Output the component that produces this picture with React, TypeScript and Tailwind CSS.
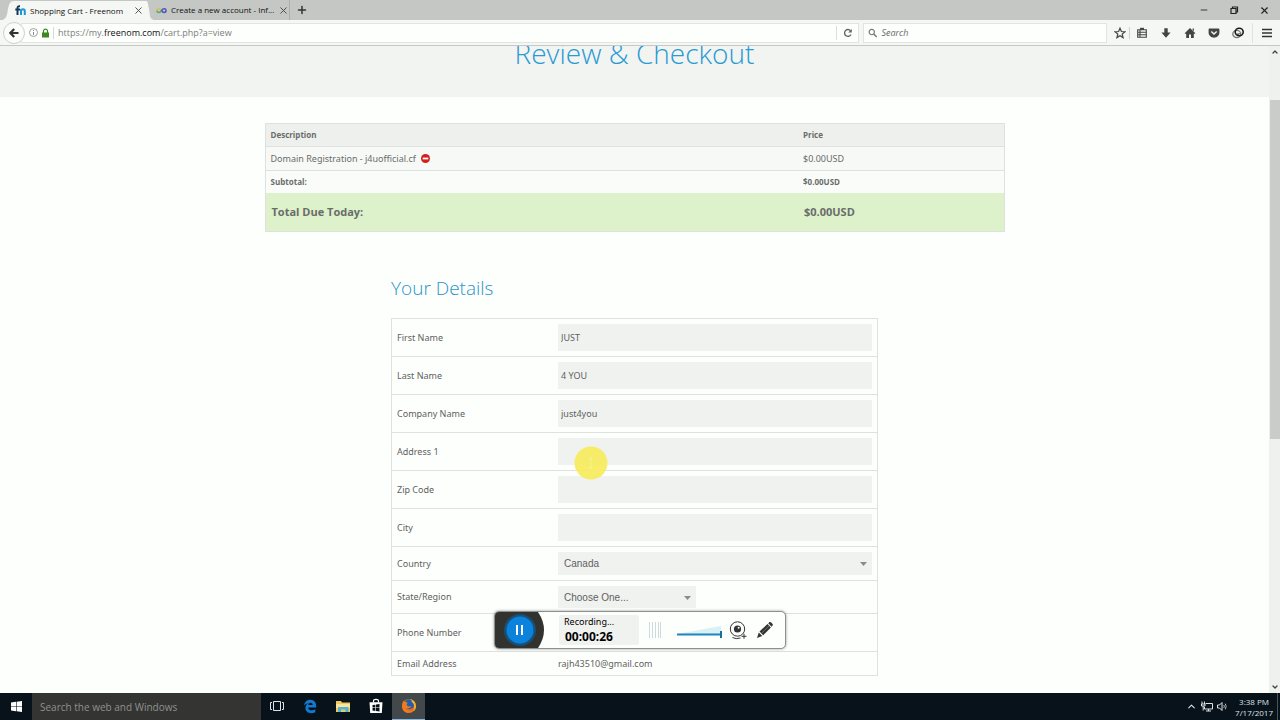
import { useState } from 'react'
import type { ReactNode } from 'react'
import { ChevronDown, ChevronUp, Minus, Plus, X } from 'lucide-react'
import { clsx } from 'clsx'

const UI_FONT = 'font-["Open_Sans","Noto_Sans",sans-serif]'
const BODY_FONT = 'font-["Noto_Sans","Open_Sans",sans-serif]'
const FORM_FONT = 'font-["Liberation_Sans",Arial,sans-serif]'

/* ---------- Browser chrome ---------- */

function TabBar() {
  return (
    <div className="flex h-5 shrink-0 items-stretch bg-[#c5c7c4] text-[8px] font-medium text-[#111]">
      <div className="flex pl-[2px] pt-px">
        <svg className="h-full w-3" viewBox="0 0 12 19" preserveAspectRatio="none">
          <path d="M0 19C5 18 5 13 6 8C7 3 8 0 12 0V19Z" fill="#f5f7f4" />
        </svg>
        <div className="flex w-[132px] items-center gap-1 bg-[#f5f7f4] pl-px">
          <svg className="h-[11px] w-[11px] shrink-0" viewBox="0 0 11 11" fill="none" strokeWidth="2">
            <path d="M2.5 10V3.2C2.5 1.5 3.4 1 5 1.2M.3 4.6H5" stroke="#17395c" />
            <path d="M6 10V4M6 6.2C6.2 3.6 9.8 3.6 9.8 6.2V10" stroke="#1a9ad6" />
          </svg>
          <span className="flex-1 whitespace-nowrap">Shopping Cart - Freenom</span>
          <button type="button" aria-label="Close tab" className="pr-[2px]">
            <X className="h-[11px] w-[11px] text-[#444]" strokeWidth={2} />
          </button>
        </div>
        <svg className="h-full w-2" viewBox="0 0 8 19" preserveAspectRatio="none">
          <path d="M8 19C3 18 4 13 3 8C2 3 2 0 0 0V19Z" fill="#f5f7f4" />
        </svg>
      </div>
      <div className="flex w-[136px] items-center gap-1 border-r border-[#adafac] pl-[2px]">
        <svg className="h-[11px] w-[11px] shrink-0" viewBox="0 0 11 11" fill="none" strokeWidth="1.5">
          <path d="M5.5 5.5C4 3.2 1 3.2 1 5.5" stroke="#d9c23c" />
          <path d="M1 5.5C1 8 4 8 5.5 5.5" stroke="#4fae74" />
          <path d="M5.5 5.5C7 3.2 10 3.2 10 5.5C10 8 7 8 5.5 5.5" stroke="#4a57c0" />
        </svg>
        <span className="flex-1 whitespace-nowrap">Create a new account - Inf...</span>
        <button type="button" aria-label="Close tab" className="pr-[9px]">
          <X className="h-[11px] w-[11px] text-[#444]" strokeWidth={2} />
        </button>
      </div>
      <button type="button" aria-label="New tab" className="px-[6px]">
        <Plus className="h-3 w-3 text-[#333]" strokeWidth={3} />
      </button>
      <div className="ml-auto flex items-center gap-5 pr-[10px] text-[#222]">
        <button type="button" aria-label="Minimize">
          <Minus className="h-[10px] w-[10px]" strokeWidth={2} />
        </button>
        <button type="button" aria-label="Restore">
          <svg className="h-[10px] w-[10px]" viewBox="0 0 10 10" fill="none" stroke="currentColor" strokeWidth="1.2">
            <path d="M2 3.5H7V8.5H2ZM3.5 3.5V2H8.5V7H7" />
          </svg>
        </button>
        <button type="button" aria-label="Close">
          <X className="h-[11px] w-[11px]" strokeWidth={2.4} />
        </button>
      </div>
    </div>
  )
}

function ToolButton({ label, children }: { label: string; children: ReactNode }) {
  return (
    <button type="button" aria-label={label} className="flex w-6 items-center justify-center">
      <svg className="h-3 w-3" viewBox="0 0 12 12" fill="#444">
        {children}
      </svg>
    </button>
  )
}

function Toolbar() {
  return (
    <div className="flex h-[26px] shrink-0 items-center border-b border-[#c6c8c6] bg-[#f5f7f4]">
      <button
        type="button"
        aria-label="Back"
        className="z-10 ml-[3px] flex h-[22px] w-[22px] shrink-0 items-center justify-center rounded-full border border-[#cfd1cf] bg-[#fbfdfb]"
      >
        <svg className="h-[10px] w-[10px]" viewBox="0 0 10 10" fill="none" stroke="#333" strokeWidth="2.2">
          <path d="M9.5 5H1.5M5.2 1L1.3 5L5.2 9" />
        </svg>
      </button>
      <div className="-ml-1 flex h-5 flex-1 items-center border border-[#e2e4e2] bg-[#fdfffd] pl-[7px]">
        <svg className="h-[9px] w-[9px]" viewBox="0 0 9 9" fill="none" stroke="#888">
          <circle cx="4.5" cy="4.5" r="4" strokeWidth=".8" />
          <path d="M4.5 4V7M4.5 2V3" />
        </svg>
        <svg className="ml-1 h-[10px] w-[7px]" viewBox="0 0 7 10">
          <path d="M1.5 5V3C1.5.5 5.5.5 5.5 3V5" fill="none" stroke="#3c8a1e" strokeWidth="1.2" />
          <rect y="4.5" width="7" height="5" fill="#3c8a1e" />
        </svg>
        <span className="ml-1 h-3 w-px bg-[#d8dad8]" />
        <span className="ml-1 flex-1 text-[9px] text-[#7b7d7b]">
          https://my.<span className="text-[#111]">freenom.com</span>/cart.php?a=view
        </span>
        <button type="button" aria-label="Reload" className="flex w-[22px] justify-center border-l border-[#dcdedc] py-[2px]">
          <svg className="h-[10px] w-[10px]" viewBox="0 0 10 10" fill="none" stroke="#666" strokeWidth="1.4">
            <path d="M8 6.5A3.4 3.4 0 1 1 7.6 2.8" />
            <path d="M8.8 1V4.6H5.2Z" fill="#666" stroke="none" />
          </svg>
        </button>
      </div>
      <label className="ml-1 flex h-5 w-[244px] items-center gap-1 border border-[#e2e4e2] bg-[#fdfffd] pl-1">
        <svg className="h-[10px] w-[10px]" viewBox="0 0 10 10" fill="none" stroke="#777" strokeWidth="1.2">
          <circle cx="4" cy="4" r="2.8" />
          <path d="M6 6L9.3 9.3" strokeWidth="1.6" />
        </svg>
        <input
          type="search"
          aria-label="Search"
          placeholder="Search"
          className="w-full bg-transparent text-[9px] italic outline-none placeholder:text-[#666]"
        />
      </label>
      <div className="flex items-center pl-px">
        <ToolButton label="Bookmark">
          <path
            d="M6 1.2L7.4 4.5L10.9 4.8L8.2 7.1L9.1 10.6L6 8.7L2.9 10.6L3.8 7.1L1.1 4.8L4.6 4.5Z"
            fill="none"
            stroke="#444"
            strokeWidth="1.2"
          />
        </ToolButton>
        <span className="-ml-[3px] h-3 w-px bg-[#d0d2d0]" />
        <ToolButton label="Reading list">
          <path d="M4 .8H8V3H4Z" />
          <path d="M1.7 2.8H10.3V10.3H1.7ZM1.7 5.2H10.3M1.7 7.7H10.3M4 3V10" fill="none" stroke="#444" strokeWidth="1.1" />
        </ToolButton>
        <ToolButton label="Downloads">
          <path d="M4.3 1.2H7.7V5.5H10.6L6 10.8L1.4 5.5H4.3Z" />
        </ToolButton>
        <ToolButton label="Home">
          <path d="M6 1L11.3 6.2L10.5 7L9.8 6.4V11H7V7.6H5V11H2.2V6.4L1.5 7L.7 6.2ZM8.6 1.5H9.9V4.2L8.6 3Z" />
        </ToolButton>
        <ToolButton label="Pocket">
          <path d="M1.8 1.5H10.2C11 1.5 11.4 2 11.4 2.6V5.6C11.4 12.4.6 12.4.6 5.6V2.6C.6 2 1 1.5 1.8 1.5Z" />
          <path d="M3.3 4.6L6 7.1L8.7 4.6" fill="none" stroke="#f5f7f4" strokeWidth="1.4" />
        </ToolButton>
        <ToolButton label="Add-on">
          <ellipse cx="4.8" cy="7" rx="4" ry="3.6" fill="none" stroke="#777" strokeWidth="1.3" />
          <ellipse cx="7.2" cy="5" rx="4" ry="3.7" fill="none" stroke="#1c1c1c" strokeWidth="1.6" />
          <path d="M4.6 6.6Q6 8.2 7.6 6.4" fill="none" stroke="#444" strokeWidth="1.3" />
        </ToolButton>
      </div>
      <button
        type="button"
        aria-label="Menu"
        className="ml-[2px] flex h-5 w-7 items-center justify-center border-l border-[#e0e2e0]"
      >
        <svg className="h-[10px] w-[10px]" viewBox="0 0 10 10" stroke="#333" strokeWidth="1.6">
          <path d="M0 1.5H10M0 5H10M0 8.5H10" />
        </svg>
      </button>
    </div>
  )
}

function Scrollbar() {
  return (
    <div className="flex w-[11px] shrink-0 flex-col items-center bg-[#eff1ef] text-[#444]">
      <ChevronUp className="mt-[2px] h-2 w-2" strokeWidth={4} />
      <div className="mt-11 h-[339px] w-[10px] bg-[#cacccA]" />
      <ChevronDown className="mb-[2px] mt-auto h-2 w-2" strokeWidth={4} />
    </div>
  )
}

/* ---------- Checkout page ---------- */

function CartTable() {
  return (
    <table className="w-full max-w-[740px] border-collapse border border-[#dfe1df] text-left text-[#6a6c6a]">
      <thead className="bg-[#eef0ee] text-[8px] leading-[12px]">
        <tr className="border-b border-[#dfe1df]">
          <th className="w-[533px] px-[5px] py-[5px] font-bold">Description</th>
          <th className="px-[5px] py-[5px] font-bold">Price</th>
        </tr>
      </thead>
      <tbody className={BODY_FONT}>
        <tr className="border-b border-[#dfe1df] bg-[#f7f9f7] text-[9px] leading-[13px]">
          <td className="px-[5px] py-[5px]">
            <span className="flex items-center gap-[5px]">
              Domain Registration - j4uofficial.cf
              <button type="button" aria-label="Remove item">
                <svg className="h-[9px] w-[9px]" viewBox="0 0 9 9">
                  <circle cx="4.5" cy="4.5" r="4.5" fill="#d3201b" />
                  <rect x="1.7" y="3.6" width="5.6" height="1.8" fill="#fff" />
                </svg>
              </button>
            </span>
          </td>
          <td className="px-[5px] py-[5px]">$0.00USD</td>
        </tr>
        <tr className={clsx('bg-[#fafcfa] text-[8px] font-bold leading-[12px]', UI_FONT)}>
          <td className="px-[5px] py-[5px]">Subtotal:</td>
          <td className="px-[5px] py-[5px]">$0.00USD</td>
        </tr>
        <tr className={clsx('bg-[#ddf1cb] text-[11px] font-bold leading-[18px]', UI_FONT)}>
          <td className="px-[6px] py-[10px]">Total Due Today:</td>
          <td className="px-[6px] py-[10px]">$0.00USD</td>
        </tr>
      </tbody>
    </table>
  )
}

interface RowProps {
  id: string
  label: string
  children: ReactNode
}

function Row({ id, label, children }: RowProps) {
  return (
    <div className="flex items-center border-b border-[#dfe1df] p-[5px]">
      <label htmlFor={id} className="w-[161px] shrink-0">
        {label}
      </label>
      {children}
    </div>
  )
}

function TextField({ id, value, narrow }: { id: string; value?: string; narrow?: boolean }) {
  return (
    <input
      id={id}
      type="text"
      defaultValue={value}
      className={clsx('h-[27px] bg-[#f0f2f0] px-[3px] outline-none', narrow ? 'w-[138px]' : 'w-full')}
    />
  )
}

function SelectField({ id, option, narrow }: { id: string; option: string; narrow?: boolean }) {
  return (
    <div className={clsx('relative text-[10px]', FORM_FONT, narrow ? 'h-[22px] w-[138px]' : 'h-[23px] w-full')}>
      <select id={id} className="h-full w-full appearance-none bg-[#f0f2f0] px-[6px] outline-none">
        <option>{option}</option>
      </select>
      <svg className="pointer-events-none absolute right-[5px] top-[10px] h-1 w-[7px]" viewBox="0 0 7 4">
        <path d="M0 0H7L3.5 4Z" fill="#8a8c8a" />
      </svg>
    </div>
  )
}

function PointerHalo() {
  return (
    <svg className="pointer-events-none absolute left-4 top-2 z-10 h-[34px] w-[34px]" viewBox="0 0 34 34">
      <circle cx="17" cy="17" r="16.5" fill="#f7ec5c" fillOpacity=".92" />
      <path d="M15 12H19M17 12V22M15 22H19" stroke="#fff" strokeOpacity=".25" />
    </svg>
  )
}

function DetailsForm() {
  return (
    <form className="w-full max-w-[487px] text-[#5f615f]">
      <h2 className="text-[19px] font-light leading-7 text-[#2a93c8]">Your Details</h2>
      <div className={clsx('mt-4 border border-[#dfe1df] text-[9px]', BODY_FONT)}>
        <Row id="first" label="First Name">
          <TextField id="first" value="JUST" />
        </Row>
        <Row id="last" label="Last Name">
          <TextField id="last" value="4 YOU" />
        </Row>
        <Row id="company" label="Company Name">
          <TextField id="company" value="just4you" />
        </Row>
        <Row id="address" label="Address 1">
          <div className="relative flex w-full">
            <TextField id="address" />
            <PointerHalo />
          </div>
        </Row>
        <Row id="zip" label="Zip Code">
          <TextField id="zip" />
        </Row>
        <Row id="city" label="City">
          <TextField id="city" />
        </Row>
        <Row id="country" label="Country">
          <SelectField id="country" option="Canada" />
        </Row>
        <Row id="state" label="State/Region">
          <SelectField id="state" option="Choose One..." narrow />
        </Row>
        <Row id="phone" label="Phone Number">
          <TextField id="phone" narrow />
        </Row>
        <div className="flex items-center p-[5px] leading-[13px]">
          <span className="w-[161px] shrink-0">Email Address</span>
          <span>rajh43510@gmail.com</span>
        </div>
      </div>
    </form>
  )
}

function CheckoutPage() {
  return (
    <main className="flex flex-1 flex-col items-center overflow-hidden bg-[#fdfffd]">
      <div className="flex h-[51px] w-full shrink-0 items-end justify-center overflow-hidden bg-[#f2f4f2] pb-[25px]">
        <h1 className="text-[28px] font-light leading-[38px] text-[#2a9ad2]">Review &amp; Checkout</h1>
      </div>
      <div className="flex w-full flex-col items-center gap-[42px] pt-[26px]">
        <CartTable />
        <DetailsForm />
      </div>
    </main>
  )
}

/* ---------- Screen recorder ---------- */

function Recorder() {
  const [paused, setPaused] = useState(false)
  const [volume, setVolume] = useState(100)

  return (
    <div className="absolute bottom-[71px] left-1/2 z-20 flex h-[38px] w-[292px] -translate-x-1/2 items-center overflow-hidden rounded-[5px] border border-[#8e908e] bg-[#fdfffd] shadow-[0_0_3px_rgba(0,0,0,0.4)]">
      <button
        type="button"
        aria-label={paused ? 'Resume' : 'Pause'}
        onClick={() => setPaused(!paused)}
        className="h-9 w-[50px] shrink-0"
      >
        <svg className="h-full w-full" viewBox="0 0 50 36">
          <path d="M0 0H43Q55 18 43 36H0Z" fill="#32332f" />
          <circle cx="25" cy="18" r="16" fill="#175078" />
          <circle cx="25" cy="18" r="13.5" fill="#0b83dc" />
          {paused ? <path d="M21 12L31 18L21 24Z" fill="#fff" /> : <path d="M21 13H23V23H21ZM26 13H28V23H26Z" fill="#fff" />}
        </svg>
      </button>
      <div className={clsx('ml-[14px] h-[30px] w-20 shrink-0 rounded-[2px] bg-[#f0f2f0] pl-[5px] text-black', BODY_FONT)}>
        <p className="text-[9px] leading-[14px]">Recording...</p>
        <p className="pl-px text-[12px] font-bold leading-4">00:00:26</p>
      </div>
      <svg className="ml-[10px] h-4 w-3 shrink-0" viewBox="0 0 12 16" stroke="#ccdbe0" strokeWidth="1">
        <path d="M.5 0V16M3.5 0V16M6.5 0V16M9.5 0V16M11.5 0V16" />
      </svg>
      <div className="relative ml-4 h-4 w-[45px] shrink-0">
        <svg className="absolute inset-0 h-full w-full" viewBox="0 0 45 16">
          <path d="M0 12L44 4V12Z" fill="#d9f0f7" />
          <path d="M0 12.5H45" stroke="#1f86bd" strokeWidth="2" />
        </svg>
        <input
          type="range"
          aria-label="Volume"
          value={volume}
          onChange={(e) => setVolume(Number(e.target.value))}
          className="absolute bottom-0 left-0 h-[7px] w-full appearance-none bg-transparent [&::-webkit-slider-thumb]:h-[7px] [&::-webkit-slider-thumb]:w-[2px] [&::-webkit-slider-thumb]:appearance-none [&::-webkit-slider-thumb]:bg-[#1b6d9c]"
        />
      </div>
      <button type="button" aria-label="Webcam" className="ml-[7px] shrink-0">
        <svg className="h-5 w-[18px]" viewBox="0 0 18 20" fill="none" stroke="#333">
          <circle cx="8.5" cy="9" r="7.2" />
          <circle cx="8.5" cy="9" r="3.6" fill="#333" stroke="none" />
          <circle cx="9.6" cy="7.8" r="1" fill="#fff" stroke="none" />
          <path d="M3.5 17.5Q7 19.5 11.5 18M12.5 16.3H17.5M15 13.8V18.8" />
        </svg>
      </button>
      <button type="button" aria-label="Draw" className="ml-[9px] shrink-0">
        <svg className="h-[18px] w-[18px]" viewBox="0 0 18 18" fill="#333">
          <path d="M1 17L2.8 11.5L6.3 15Z" />
          <path d="M3.5 10.6L11.5 3L14.9 6.4L7.2 14.3Z" />
          <path d="M12.2 2.2L13.6 1.1Q14.4.7 15 1.3L16.6 3Q17.2 3.8 16.6 4.5L15.6 5.7Z" />
          <path d="M5.5 12.3L13.2 4.8" stroke="#888" strokeWidth=".7" />
        </svg>
      </button>
    </div>
  )
}

/* ---------- Taskbar ---------- */

function TaskButton({ label, active, children }: { label: string; active?: boolean; children: ReactNode }) {
  return (
    <button
      type="button"
      aria-label={label}
      className={clsx(
        'flex w-[33px] items-center justify-center border-b',
        active ? 'border-[#86b8e2] bg-[#43484a]' : 'border-transparent'
      )}
    >
      <svg className="h-4 w-4" viewBox="0 0 16 16">
        {children}
      </svg>
    </button>
  )
}

function Taskbar() {
  return (
    <footer className="flex h-[27px] shrink-0 items-stretch bg-[#07121a] text-[#dfe3e5]">
      <button type="button" aria-label="Start" className="flex w-8 items-center justify-center">
        <svg className="h-[11px] w-[11px]" viewBox="0 0 11 11" fill="#fff">
          <path d="M0 1.5L5 .8V5.2H0ZM5.6.7L11 0V5.2H5.6ZM0 5.8H5V10.2L0 9.5ZM5.6 5.8H11V11L5.6 10.3Z" />
        </svg>
      </button>
      <input
        type="search"
        aria-label="Search the web and Windows"
        placeholder="Search the web and Windows"
        className="-mr-px w-[229px] bg-[#343532] px-2 pt-px text-[10px] outline-none placeholder:text-[#8f918f]"
      />
      <TaskButton label="Task view">
        <path d="M4.5 3.5H11.5V12.5H4.5ZM3 4.5H1.5V11.5H3M13 4.5H14.5V11.5H13" fill="none" stroke="#dfe3e5" />
      </TaskButton>
      <TaskButton label="Edge">
        <path
          d="M2 7.6C2.7 3.5 5.3 1.8 8.3 1.8C12.3 1.8 14.2 4.8 14.2 8V9.4H6.2C6.4 12.8 10.7 13 13.3 11.3V14.2C8.5 16.5 3.4 14.6 3.4 10C3.4 7.6 4.6 6.2 6.6 5.2C4.7 5.4 3 6.2 2 7.6ZM6.3 7H10.6C10.6 3.8 6.6 4.1 6.3 7Z"
          fill="#1378cf"
        />
      </TaskButton>
      <TaskButton label="File Explorer">
        <path d="M1 3H6L7 4.5H15V14H1Z" fill="#f0c75c" />
        <path d="M1 6H15V10H1Z" fill="#fbe39a" />
        <path d="M3 9H13.5V14H10.5V11.5H6V14H3Z" fill="#4fb4dc" />
      </TaskButton>
      <TaskButton label="Store">
        <path d="M5.5 4.5V2.8C5.5.8 10.5.8 10.5 2.8V4.5" fill="none" stroke="#fff" strokeWidth="1.2" />
        <path d="M1.5 4.3H14.5L13.8 15H2.2Z" fill="#fff" />
        <path d="M4.5 7.1L7.4 6.7V9.5H4.5ZM8 6.6L11.5 6.1V9.5H8ZM4.5 10.1H7.4V12.9L4.5 12.5ZM8 10.1H11.5V13.5L8 13Z" fill="#07121a" />
      </TaskButton>
      <TaskButton label="Firefox" active>
        <circle cx="8" cy="8" r="7" fill="#e66a1c" />
        <circle cx="8.3" cy="6.3" r="5" fill="#1f5fae" />
        <path d="M8 1A7 7 0 0 1 15 8C15 10 14 12 12.5 13.3C14 9 13 5 10.5 4C11.5 3 10 1.5 8 1Z" fill="#f6b12e" />
        <path d="M1.2 6.5C1.5 4.5 2.2 3.3 3 2.6C3.2 3.8 4.5 4.4 6.8 4.8C5.6 5.8 5.4 6.5 6 7.5C7 8.8 9 8.4 10.3 8.3C9.5 10.5 6.5 11 4.2 9.8C5.5 13.4 10.5 13.6 12.8 11C11.5 16.5 0 16.5 1.2 6.5Z" fill="#ee7b20" />
      </TaskButton>
      <div className="ml-auto flex items-center gap-1">
        <ChevronUp className="h-[11px] w-[11px]" strokeWidth={2.4} />
        <svg className="h-[11px] w-3" viewBox="0 0 12 11" fill="none" stroke="currentColor">
          <path d="M4.5 2.5H11.5V8H3.5V6M7.5 8V10M5 10H10M1 .5V3M3.5 .5V3M.5 3H4V5H.5ZM2.2 5V9.5" />
        </svg>
        <svg className="h-[11px] w-[11px]" viewBox="0 0 11 11" fill="none" stroke="currentColor">
          <path d="M.5 4H2.5L5 1.5V9.5L2.5 7H.5Z" />
          <path d="M6.8 4Q7.8 5.5 6.8 7M8.3 2.7Q10 5.5 8.3 8.3" strokeWidth=".8" />
        </svg>
        <div className="ml-[3px] text-center text-[8px] leading-[11px]">
          <p>3:38 PM</p>
          <p>7/17/2017</p>
        </div>
        <span className="h-[27px] w-[3px] border-l border-[#4b5357]" />
      </div>
    </footer>
  )
}

export default function App() {
  return (
    <div className={clsx('relative flex h-screen flex-col overflow-hidden', UI_FONT)}>
      <TabBar />
      <Toolbar />
      <div className="flex min-h-0 flex-1">
        <CheckoutPage />
        <Scrollbar />
      </div>
      <Taskbar />
      <Recorder />
    </div>
  )
}
